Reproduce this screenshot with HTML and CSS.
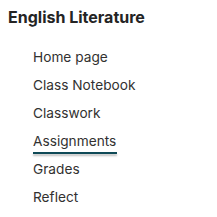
FILE: index.html
```html
<!DOCTYPE html>
<html>
<head>
<meta charset="utf-8">
<link rel="stylesheet" href="styles.css">
</head>
<body>
<nav class="nav">
  <h1 class="title">English Literature</h1>
  <ul class="list">
    <li class="item">Home page</li>
    <li class="item">Class Notebook</li>
    <li class="item">Classwork</li>
    <li class="item active">Assignments</li>
    <li class="item">Grades</li>
    <li class="item">Reflect</li>
  </ul>
</nav>
</body>
</html>
```
FILE: styles.css
```css
html, body {
  margin: 0;
  padding: 0;
  background: #ffffff;
}
.nav {
  padding: 7px 0 0 8px;
  font-family: Inter, "Liberation Sans", Arial, sans-serif;
  color: #323130;
}
.title {
  margin: 0;
  font-size: 16px;
  font-weight: 700;
  line-height: 20px;
  color: #242424;
}
.list {
  list-style: none;
  margin: 16px 0 0 0;
  padding: 0 0 0 25px;
  display: flex;
  flex-direction: column;
}
.item {
  font-size: 13.7px;
  line-height: 28px;
  height: 28px;
  display: flex;
  align-items: center;
}
.item.active {
  align-self: flex-start;
  position: relative;
}
.item.active::after {
  content: "";
  position: absolute;
  left: 0;
  right: -1px;
  bottom: 1px;
  height: 2px;
  background: #0f4a57;
  box-shadow: 0 2px 2px rgba(0,0,0,0.25);
}
```
